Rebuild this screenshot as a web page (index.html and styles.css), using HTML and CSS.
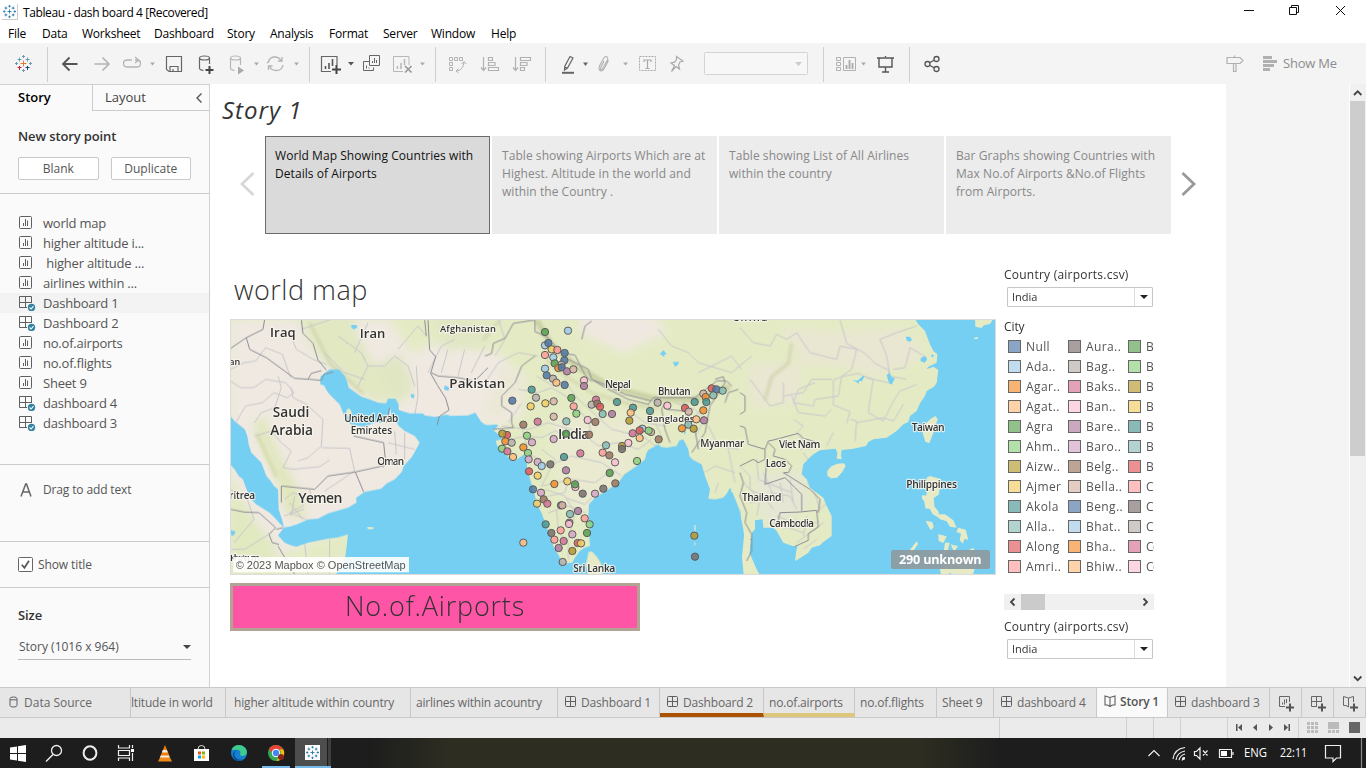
FILE: index.html
```html
<!DOCTYPE html>
<html lang="en">
<head>
<meta charset="utf-8">
<title>Tableau - dash board 4 [Recovered]</title>
<link rel="stylesheet" href="styles.css">
</head>
<body>
<svg width="0" height="0" class="defs">
  <defs>
    <symbol id="sheet" viewBox="0 0 14 14"><rect x=".5" y=".5" width="12" height="12" rx="1" fill="none" stroke="#5f5f5f"/><path d="M4.500 10V7M6.500 10V3M8.500 10V4.500" stroke="#5f5f5f"/></symbol>
    <symbol id="dash" viewBox="0 0 17 16"><path d="M12.500 8V1.500H.5V12.500H8M6.500 1.500V12.500M.5 7.500H12.500" fill="none" stroke="#5f5f5f"/><circle cx="12.500" cy="12.500" r="3.700" fill="#3381a3"/><path d="M10.600 12.500l1.500 1.500 2.400-2.800" fill="none" stroke="#fff" stroke-width="1.100"/></symbol>
    <symbol id="grid" viewBox="0 0 12 12"><rect x=".5" y=".5" width="10" height="10" rx="1" fill="none" stroke="#5f5f5f"/><path d="M5.500 1V11M1 5.500H11" stroke="#5f5f5f"/></symbol>
    <symbol id="book" viewBox="0 0 12 12"><path d="M6 2.500L1 1V10L3.500 10 6 11.500 8.500 10 11 10V1ZM6 2.500V11" fill="none" stroke="#5f5f5f" stroke-width="1.100"/></symbol>
    <symbol id="tab-mark" viewBox="0 0 16 16"><path d="M8 5.500v5M5.500 8h5M8 0v3M6.500 1.500h3M8 13v3M6.500 14.500h3M0 8h3M1.500 6.500v3M13 8h3M14.500 6.500v3M3.500 2v3.500M1.800 3.800h3.500M12.500 2v3.500M10.700 3.800h3.500M3.500 10.500v3.500M1.800 12.200h3.500M12.500 10.500v3.500M10.700 12.200h3.500" fill="none" stroke="currentColor" stroke-width="1.100"/></symbol>
  </defs>
</svg>

<header class="titlebar">
  <span class="appicon"><svg width="13" height="13"><use href="#tab-mark"/></svg></span>
  <span class="apptitle">Tableau - dash board 4 [Recovered]</span>
  <svg class="winctl" width="116" height="23" viewBox="1240 0 116 23"><path d="M1245 10.500h10M1290.500 7.500h7v7h-7zM1292.500 7v-1.500h7v7h-1.500M1337 6l9 9M1346 6l-9 9" fill="none" stroke="#111"/></svg>
</header>
<nav class="menu"><span>File</span><span>Data</span><span>Worksheet</span><span>Dashboard</span><span>Story</span><span>Analysis</span><span>Format</span><span>Server</span><span>Window</span><span>Help</span></nav>

<div class="toolbar">
  <svg width="47" height="35" viewBox="0 47 47 35" fill="none">
    <path d="M23.500 60.500v6M20.500 63.500h6" stroke="#e8762c"/>
    <path d="M23.500 55v3M22 56.500h3M19.500 57.500v4M17.500 59.500h4M27.500 57.500v4M25.500 59.500h4" stroke="#6d9db5"/>
    <path d="M19.500 66v4M17.500 67.500h4" stroke="#c72035"/><path d="M27.500 66v4M25.500 67.500h4" stroke="#1f457e"/>
    <path d="M15 63.500h3M16.500 62v3M29 63.500h3M30.500 62v3M23.500 69v3M22 70.500h3" stroke="#7199a6"/>
  </svg>
  <svg width="261" height="35" viewBox="48 47 261 35" fill="none">
    <path d="M77.500 64H63M69.500 57.500L63 64l6.500 6.500" stroke="#555" stroke-width="1.800"/>
    <path d="M94.500 64H109M102.500 57.500L109 64l-6.500 6.500" stroke="#b4b4b4" stroke-width="1.600"/>
    <path d="M132 60h-4.500q-4 0-4 3.500t4 3.500h9.500q3.500 0 3.500-3.500t-3.500-3.500h-2M135 57l3.500 3-3.500 3" stroke="#b4b4b4" stroke-width="1.300"/>
    <path d="M150 62.500h5l-2.500 3z" fill="#aaa"/>
    <path d="M166.500 56.500h15v15h-12.500l-2.500-2zM170 71.500v-5h8v5M173 71v-2" stroke="#666" stroke-width="1.200"/>
    <g stroke="#666" stroke-width="1.200"><ellipse cx="204.500" cy="58" rx="5" ry="2"/><path d="M199.500 58v10q0 2 4 2.500M209.500 58v6"/></g>
    <path d="M209.500 66v8M205.500 70h8" stroke="#444" stroke-width="2"/>
    <g stroke="#b7b7b7" stroke-width="1.200"><ellipse cx="235.500" cy="58" rx="5" ry="2"/><path d="M230.500 58v10q0 2 4 2.500M240.500 58v7"/></g>
    <path d="M238 66.500l6 4-6 4z" fill="#aaa"/><path d="M254 62.500h5l-2.500 3z" fill="#aaa"/>
    <path d="M268.500 62q1-5 6.500-5 4 0 6 3.500M283 65q-1 5.500-7 5.500-4.500 0-6.500-4M282 57v4h-4M267 63l2.500-2M268.500 70v-4h4" stroke="#b4b4b4" stroke-width="1.300"/><path d="M294 62.500h5l-2.500 3z" fill="#aaa"/>
  </svg>
  <svg width="125" height="35" viewBox="310 47 125 35" fill="none">
    <path d="M331 71.500h-9.500v-15h15.500V65" stroke="#666" stroke-width="1.200"/><path d="M325.500 69v-3M329 69v-6M332.500 66v-7" stroke="#555" stroke-width="1.600"/><path d="M336.500 65v9M332 69.500h9" stroke="#444" stroke-width="2"/><path d="M348 62h6l-3 3.500z" fill="#555"/>
    <path d="M369.500 61.500h-6v9h10v-3M369.500 55.500h10v10h-10zM366.500 68.500v-3M369 68.500v-1M372.500 63v-2M374.500 63v-5M376.500 63v-3" stroke="#666"/>
    <path d="M403 71.500h-9.500v-15h15.500V65" stroke="#b7b7b7"/><path d="M397.500 69v-3M401 69v-6M404.500 65v-6" stroke="#b7b7b7" stroke-width="1.500"/><path d="M405 66l6.500 6.500M411.500 66l-6.500 6.500" stroke="#999" stroke-width="1.700"/><path d="M420 62.500h5l-2.500 3z" fill="#aaa"/>
  </svg>
  <svg width="109" height="35" viewBox="436 47 109 35" fill="none" stroke="#b2b2b2">
    <path d="M449.500 57.500h3v3h-3zM454.500 57.500h3v3h-3zM459.500 57.500h3v3h-3zM449.500 62.500h3v3h-3zM449.500 67.500h3v3h-3zM456 71q7 0 8-9M461.500 64l2.500-2.500 2 2.500M458.500 68.500l-2.500 2.500 2.500 2"/>
    <path d="M483.500 57v13M481 67.500l2.500 3 2.500-3M488.500 57.500h4v3h-4zM488.500 62.500h6.500v3h-6.500zM488.500 67.500h10v3h-10z" stroke-width="1.200"/>
    <path d="M515.500 57v13M513 67.500l2.500 3 2.500-3M520.500 57.500h10v3h-10zM520.500 62.500h6.500v3h-6.500zM520.500 67.500h4v3h-4z" stroke-width="1.200"/>
  </svg>
  <svg width="277" height="35" viewBox="546 47 277 35" fill="none">
    <path d="M570 56.500l3 1.500-5.500 10-3 2 .3-3.800zM564.500 67l3 1" stroke="#666" stroke-width="1.200"/><path d="M562 72.800h12" stroke="#666" stroke-width="2"/><path d="M583 62.500h5l-2.500 3.500z" fill="#666"/>
    <path d="M604 61l-3.500 7q-.5 2 1.500 1.500l5.500-9.500q1-3-1.500-3.500-1.500 0-2.500 2l-4 7.500q-1.500 4 1.500 5 2 0 3-2l4.500-8.500" stroke="#b2b2b2" stroke-width="1.100"/><path d="M623 62.500h5l-2.500 3z" fill="#aaa"/>
    <rect x="639.500" y="56.500" width="16" height="14" stroke="#aaa" stroke-dasharray="2 1"/><path d="M644 62v-2h7v2M647.500 60v8.500M645.500 68.500h4" stroke="#aaa" stroke-width="1.200"/>
    <path d="M676.500 56.500l6.500 4.500-3 1-1.500 3 1 4-3.500-2.500-4.500 5 3-6-3.500-2.500 3.500-.8 2-2.700z" stroke="#aaa" stroke-width="1.200"/>
    <rect x="704.500" y="52.500" width="103" height="22" rx="1" fill="#f7f7f7" stroke="#d4d4d4"/><path d="M795 62h7l-3.500 4z" fill="#ccc"/>
  </svg>
  <svg width="85" height="35" viewBox="824 47 85 35" fill="none">
    <path d="M836.500 57.500h4v3h-4zM836.500 62.500h4v3h-4zM836.500 67.500h4v3h-4zM843.500 57.500h12v13h-12z" stroke="#b2b2b2"/><path d="M846.500 69v-4M849.500 69v-9M852.500 69v-6" stroke="#aaa" stroke-width="1.800"/><path d="M861 62.500h5l-2.500 3z" fill="#aaa"/>
    <path d="M877 58h17M879 58.500v8.500h13v-8.500M885.500 67v5M882 72h7M885.500 57v-1" stroke="#555" stroke-width="1.400"/>
  </svg>
  <svg width="456" height="35" viewBox="910 47 456 35" fill="none">
    <g stroke="#555" stroke-width="1.300"><circle cx="927.500" cy="64" r="2.500"/><circle cx="936.500" cy="59" r="2.500"/><circle cx="936.500" cy="69" r="2.500"/><path d="M930 62.500l4-2.300M930 65.500l4 2.300"/></g>
    <path d="M1227 57.500h13l3 3-3 3h-13zM1234.500 55.500v2M1233.500 63.500v8h2.500v-8" stroke="#b0b0b0" stroke-width="1.200"/>
    <path d="M1263 57.500h9M1263 61.500h14M1263 65.500h11M1263 69.500h7" stroke="#b0b0b0" stroke-width="3"/>
    <text x="1283" y="68" font-size="13" fill="#8d8d8d" textLength="54">Show Me</text>
  </svg>
</div>

<main class="main">
  <aside class="side">
    <div class="panetabs"><b>Story</b><span>Layout<svg width="8" height="12" viewBox="0 0 8 12"><path d="M6.500 1.500L2 6l4.500 4.500" fill="none" stroke="#555" stroke-width="1.400"/></svg></span></div>
    <section class="newpoint"><h3>New story point</h3><div class="btns"><button>Blank</button><button>Duplicate</button></div></section>
    <ul class="sheets">
      <li><svg><use href="#sheet"/></svg>world map</li>
      <li><svg><use href="#sheet"/></svg>higher altitude i...</li>
      <li><svg><use href="#sheet"/></svg>&nbsp;higher altitude ...</li>
      <li><svg><use href="#sheet"/></svg>airlines within ...</li>
      <li class="on d"><svg><use href="#dash"/></svg>Dashboard 1</li>
      <li class="d"><svg><use href="#dash"/></svg>Dashboard 2</li>
      <li><svg><use href="#sheet"/></svg>no.of.airports</li>
      <li><svg><use href="#sheet"/></svg>no.of.flights</li>
      <li><svg><use href="#sheet"/></svg>Sheet 9</li>
      <li class="d"><svg><use href="#dash"/></svg>dashboard 4</li>
      <li class="d"><svg><use href="#dash"/></svg>dashboard 3</li>
    </ul>
    <section class="dragtext"><svg width="12" height="14" viewBox="0 0 12 14"><path d="M1 13.500L5.700 1h.8L11 13.500M2.700 9h6.700" fill="none" stroke="#666" stroke-width="1.500"/></svg>Drag to add text</section>
    <section class="showtitle"><svg width="15" height="15" viewBox="0 0 15 15"><rect x=".5" y=".5" width="14" height="14" rx="1" fill="#fff" stroke="#666"/><path d="M3.800 7.800l2.600 3 4.600-7" fill="none" stroke="#555" stroke-width="1.700"/></svg>Show title</section>
    <section class="size"><h3>Size</h3><div class="select">Story (1016 x 964)<i class="caret"></i></div></section>
  </aside>

  <div class="canvas">
    <h1>Story 1</h1>
    <div class="points">
      <svg width="17" height="28" viewBox="0 0 17 28"><path d="M14.500 3L3 14l11.500 11" fill="none" stroke="#d8d8d8" stroke-width="2.800"/></svg>
      <div class="pt sel">World Map Showing Countries with<br>Details of Airports</div>
      <div class="pt">Table showing Airports Which are at<br>Highest. Altitude in the world and<br>within the Country .</div>
      <div class="pt">Table showing List of All Airlines<br>within the country</div>
      <div class="pt">Bar Graphs showing Countries with<br>Max No.of Airports &amp;No.of Flights<br>from Airports.</div>
      <svg width="17" height="28" viewBox="0 0 17 28"><path d="M2.500 3L14 14 2.500 25" fill="none" stroke="#999" stroke-width="2.800"/></svg>
    </div>
    <div class="dashboard">
      <div class="left">
        <h2>world map</h2>
        <svg class="map" width="766" height="256" viewBox="690 957 2298 768">
          <defs>
            <filter id="soft" x="-20%" y="-20%" width="140%" height="140%"><feGaussianBlur stdDeviation="14"/></filter>
            <filter id="soft2" x="-20%" y="-20%" width="140%" height="140%"><feGaussianBlur stdDeviation="5"/></filter>
            <filter id="coast" filterUnits="userSpaceOnUse" x="660" y="930" width="2360" height="820"><feTurbulence type="fractalNoise" baseFrequency=".14" numOctaves="2" seed="4"/><feDisplacementMap in="SourceGraphic" scale="4.500" xChannelSelector="R" yChannelSelector="G"/></filter>
          </defs>
          <rect x="690" y="957" width="2298" height="768" fill="#e4ebc4"/>
          <path d="M690 957H1170L1230 1060 1330 1020 1500 1060 1560 1130 1570 1240 1500 1280H1280L1260 1500 690 1725Z" fill="#efe9e1" filter="url(#soft)"/>
          <g filter="url(#soft)">
            <path d="M890 940L940 1050 1010 1120 1090 1190 1180 1215 1240 1180 1140 1120 1080 1020 1050 940Z" fill="#e1e8c2"/>
            <path d="M1120 1100L1200 1060 1240 1150 1200 1210Z" fill="#e0e6c2"/>
            <path d="M1290 950h190l-20 90-130 10z" fill="#e1e7c4"/>
            <path d="M760 1270l60 130 40 140 60 20 -20-80-60-110-50-120z" fill="#dfe7ba"/>
            <path d="M690 1430l70 130 60 70 10 90H690z" fill="#e0e9bf"/>
            <path d="M1740 940h220l40 60-130 60-130-60z" fill="#efe8e0"/>
            <path d="M2250 1090h160l-20 120-140 10zM2480 1000l220-20 80 90-150 60-130-40zM2340 980l200 20 60 100-190-10z" fill="#e9e6d2"/>
            <path d="M1500 1100l90 30-80 120-60 0z" fill="#ece8d6"/>
            <path d="M1650 1250h280l-30 160-160 140-60-60z" fill="#e9ead0"/>
            <path d="M2260 1420h150l20 100-130 60z" fill="#e5e6d4"/>
          </g>
          <g fill="none" filter="url(#soft2)" stroke-linejoin="round">
            <path d="M1610 960l40 70 80 70 100 60 130 35 120 5 110 -40" stroke="#cbd1a5" stroke-width="18"/>
            <path d="M1640 1080l60 50 80 50 120 35 80 10" stroke="#d8dcb4" stroke-width="12"/>
            <path d="M1500 960l-50 60M930 970l60 120 100 90M2375 1030l-10 60-50 40-20 70" stroke="#d0d4ae" stroke-width="8"/>
            <path d="M1580 1420l20 100 30 130M770 1300l60 130" stroke="#d6deae" stroke-width="12"/>
          </g>

          <g fill="none" stroke="#c9c7cc" stroke-width="3" stroke-linejoin="round" filter="url(#coast)">
            <g transform="translate(684 948)">
              <path d="M8 160l40-20 35-5 30-40 50 20 25 70M8 195l30 20 40 0 35-25 60 10 25 30-20 15-40-15-35 30-50 10-30 50 30 25M190 215l5 30 40 20 50 45-5 80-40 35-30 10M150 180l10 35-20 60-40 15-20 30M280 395l85 2 15 70M80 360l50-15 30 35 30 25-25 50 30 5 80-8 30-20M245 520l5 25M380 465l-90 60M480 380l80 20M500 345l5 70M530 350v80"/>
              <path d="M185 50l20 50 50 30 40 15M330 60l70 50 20 40 50 0 30-30 40 30 20 60M220 40l90-30M380 110l40-90M420 150l-30 60M510 100l60-70 25 30M565 150l5 90-10 60M600 170l40-80 40-20M640 170l20-70M690 180l20-80M730 170l40-80M290 110l60 60 60 20"/>
              <path d="M170 550l25-20 30 10 0 30-40 20 50 20M8 520l50 30 20 60-60 70M230 680l10 95M305 670v105M130 650l-80 50-40 0M185 560l40 50M200 540l-10 60M168 600l60-20"/>
            </g>
            <g transform="translate(1455 948)">
              <path d="M155 180l50 30 40-20M100 220l60 10 40-15 50 30 60 70 10 40-60 10-50-20-40 20-50-5-40 10M110 260l-40 60M250 210l30 40 100 90 80 20M50 330l80 10 60-20 100 30 50 40 60-10 60 20 40-30M110 330l20 80 60 40 70-30 90 20 60 40M170 400l40 30-40 80 90-20 70 10 40-30M250 480l-10 50-50 10M180 520l60 20 30 50-20 80M240 545l60 20 20-20M450 340l60 50 20-30-20-40M440 290l40 30 60 10M570 260l60 20 30 30-30 50M600 330l60-60M190 590l60-20 50 20M215 580l5 70 30 30 0 50"/>
              <path d="M520 40l40 50 50 20 30 30 100 30 60-50M640 170l100-50 30 40M670 330l30 60 60 10M640 480l50-30 60 20M700 500l-10 30M730 400l20 100M0 200l40-60 60-30 60 10M40 10l20 60-30 50"/>
            </g>
            <g transform="translate(2220 948)">
              <path d="M0 35l40 45 50 10 20-35 30 15 30-20 40 60 80 20 10-40 50 10-15 60-30 20-10 60-70 10-5 20-60-10 15-40 50-20M300 12l20 70 55 30 30 30 40 20 10 40-70-15-30-15-50 10-25 10 0 75 50 20-10 35M370 180l30 10-10 60-5 40 45 25 30-60 20-30 50-20M460 160l35-5 15-60 50 30M530 30l-60 20-50 20 20 50 10 60 50 10M130 240l60-10 25-40 60 0M155 240l20 50 80 10 20-20M280 350l-20 40M330 310l20 5-5 60M350 320l80-15 30 10 30-50M160 310l30 20-20 20 40 50M30 190l60 80 40-10 0-60"/>
              <path d="M0 450l30 30 0 40 40 20 30 40M50 430l5 60 50 20 50 20M90 530l60 10 20 40M60 550l-10 50M200 500l20 20 20 60M110 600l50 20 70 0M130 640l40-30M260 560l-30 30M250 620l-40 30-40 30M190 410l20 30M210 390l-30 10M230 670l-40 30M10 500l60 60M70 470l40 90M20 670l20 10M15 710l25 5M560 500l45 20M555 540l20 30M120 500l10 60M150 490l10 70M30 560l50-10M100 620l90 30M200 600l-10 60M570 330l20 10M560 350l18 8"/>
            </g>
          </g>

          <g fill="#74cff2" filter="url(#coast)">
            <g transform="translate(684 948)">
              <path d="M277 182L292 170 305 160 333 160 350 180 357 196 362 215 380 228 400 242 425 250 450 260 474 262 480 248 502 248 512 265 512 282 545 292 585 292 590 298 620 303 655 296 670 300 720 298 742 290 755 310 760 318 775 328 790 330V780H320L345 745 353 715 360 655 330 664 300 668 240 680 205 692 190 688 170 680 150 658 168 634 185 632 210 624 240 610 270 608 300 592 360 575 385 560 385 545 410 528 460 518 475 503 500 490 522 467 527 450 550 425 562 405 575 380 560 360 530 345 512 330 505 318 490 300 488 275 483 300 465 320 440 320 410 332 370 327 353 306 345 290 335 265 300 230 288 208 277 205Z"/>
              <path d="M-6 285L22 318 50 340 58 360 62 385 70 410 100 440 115 480 128 495 138 510 150 520 152 580 162 610 168 634 155 622 145 610 125 590 85 565 70 550 60 530 50 505 45 490 32 480 20 460 -6 430Z"/>
              <path d="M370 26l15 0 3 8-10 6-8-5zM548 234l12 2-3 12-8-5zM650 208l8 3 7 6-5 7-12-4zM8 642l15 5-6 12-9-2z"/>
            </g>
            <g transform="translate(1455 948)">
              <path d="M0 328L35 325 40 330 25 343 42 356 52 370 32 374 36 388 65 420 90 433 118 415 126 440 126 462 135 490 145 520 155 560 170 592 180 618 195 660 205 690 222 720 232 742 262 740 270 724 285 705 298 695 315 690 313 660 316 640 310 600 312 565 330 545 370 520 400 500 418 475 440 460 455 450 480 430 484 412 490 402 520 385 528 393 545 395 575 390 583 373 595 370 610 400 613 420 622 430 650 445 660 480 675 520 670 548 690 550 715 545 725 533 735 515 745 535 763 580 775 640 782 700 810 790H0Z"/>
              <path d="M524 112l8-5 4-6 5 9 5 2-8 5 0 6-6-4zM563 138l20 0-5 9-8 5zM595 344l8 3-4 10z"/>
            </g>
            <g transform="translate(2220 948)">
              <path d="M515 -6L535 25 555 45 570 85 580 105 592 115 590 140 565 152 560 160 580 152 595 162 590 200 582 212 560 225 555 240 540 262 530 285 510 300 505 318 490 325 470 345 440 365 400 370 385 378 378 390 340 398 305 402 303 418 305 430 290 428 292 410 287 398 240 403 220 415 204 430 190 445 185 475 200 490 210 515 250 545 260 570 275 600 275 660 250 678 240 688 215 695 205 710 175 730 165 735 168 710 172 690 158 690 130 680 110 645 100 635 70 635 68 610 45 613 45 640 35 650 30 690 28 710 45 750 58 790H790V-6Z"/>
              <path d="M0 575l5 60 7 30 0 50 18 35 18 40H0zM498 62l12 0 6 10-8 6-9-6zM542 126l12-6 8 10-8 10-12-4zM573 115l10 3-7 7zM440 178l8-8 6 12 11 6-5 8-5 10-8-6zM338 192l14 2 16-14 6 0-8 16-9-1 0 8z"/>
            </g>
          </g>
          <g fill="#e6ebc6" filter="url(#coast)">
            <path d="M417 633l20 1-2 6-15 0zM355 284l7-8 8 10-2 14-10 2z" transform="translate(684 948)"/>
            <path d="M310 708l10-2 15 16 12 18 8 45h-45l-6-40zM628 628h4v18h-4zM628 678h3v10h-3z" transform="translate(1455 948)"/>
            <g transform="translate(2220 948)">
              <path d="M262 464l12-13 18-8 20-1 5 8-10 18-16 17-18 2-11-8zM572 308l15-8 6 10-10 32-15 40-12-5-8-25 8-28zM705 0h60l-15 24-18 4-8 8-18-4zM702 64h12v5h-12z"/>
              <path d="M560 485l10-5 18 5 15 4-3 25-4 22-15 10 2 25 14 18-4 14-15-8-8-16-14-2-3-20-8-12 3-8 10 2 6-20-6-18zM557 614l20 4 4 15-8 10-8-12zM585 595l30 0 25 18 10 22-20-3-10-16-20-6zM655 635l22 6 8 30-12-2-4 14-10-10 4-20-14-6zM595 655l25 6-10 20-14-6zM615 680l14 0-8 34-12 8zM632 685l22 6-12 16zM530 676l4 8-20 30-12-2zM605 785l-6-28 16-22 30-10 30-16 25-14 8 20 0 30-12 40-30-2-24 2-10-15z"/>
              <path d="M14 640l20 15-4 35-2 20 17 40 20 38H12l-6-65z"/>
            </g>
          </g>

          <g fill="none" stroke="#8d8d96" stroke-width="3" stroke-linejoin="round" filter="url(#coast)">
            <g transform="translate(684 948)">
              <path d="M8 97l47-32 50-25 5-30M55 65l10 35 50 25 85 62 45 3 35 3 8-18 28-7M240 190l10-18 30-8M220 12l5 40 30 30 15 50 25 30M600 12l5 90 18 20-15 50 20 35 25 40 10 35-30 20-5 25M610 170l20 10 60 5 50 10 30-30 10-10M595 60l-5-48M160 560v-50l100 10 40-40 82-12 90-20 20-20M382 468l25 60M472 430l-5-50-90-20M8 580l40 8 45 2 50 45-20 20 10 25 20 5M145 640l20-5M150 690l50 85M475 320l10-45"/>
            </g>
            <g transform="translate(1455 948)">
              <path d="M0 120l20-8 5-30 35-15 25-45 65-10 0 35 35 15 45 50 40 5 30 60 20 20M150 120l-40 30-20 50-40 40 0 30 30 20 0 30 5 15-60 5M250 130l60 30 10 30 50 30 60 30 60 15 15-20 45 0 80 0 25-20 40-30 30 0 15 15M320 190l50 20 50 25 80 20M690 190l25-8 5 20M540 260l-10 20 10 60 15 40M595 260l15 20 0 50-20 20M545 280l50 5M720 200l-25 40-20 30-15 80-40 60M630 340l10 60M760 220l-30 10-10 30M290 70l10-40 20-15"/>
            </g>
            <g transform="translate(2220 948)">
              <path d="M0 230l15 10 0 45-15 10M0 330l15 5 10 50 50 15 0 30-20 10-15-10-40 20M75 400l10-25 15-3 75-20 15 15 35 10M85 380l20 20-5 20 35 10 20 20-10 20-15 0 80 50 30 30-5 40M75 505l30-10 30-10 30 30 20 20M75 505l5-70M120 590l60-2 50-5 5 50-30 20 0 20-40 18M120 590l-10 45M0 470l10 30-10 40 20 50-5 30 20 35 0 50-15 30M185 535l0 50"/>
            </g>
          </g>
          <g class="labels" id="country-names">
            <text x="810" y="1010" font-size="39" textLength="77">Iraq</text><text x="1079" y="1014" font-size="39" textLength="77">Iran</text>
            <text x="1320" y="996" font-size="28" textLength="168">Afghanistan</text><text x="1348" y="1165" font-size="40" textLength="168">Pakistan</text>
            <text x="818" y="1252" font-size="41" textLength="110">Saudi</text><text x="811" y="1304" font-size="41" textLength="128">Arabia</text>
            <text x="1033" y="1266" font-size="30" textLength="162">United Arab</text><text x="1052" y="1302" font-size="30" textLength="124">Emirates</text>
            <text x="1132" y="1394" font-size="30" textLength="80">Oman</text><text x="895" y="1508" font-size="42" textLength="132">Yemen</text>
            <text x="688" y="1094" font-size="27">an</text><text x="688" y="1496" font-size="30" textLength="77">ritrea</text>
            <text x="1815" y="1165" font-size="31" textLength="78">Nepal</text><text x="1974" y="1184" font-size="30" textLength="98">Bhutan</text>
            <text x="1940" y="1266" font-size="29" textLength="143">Banglades</text><text x="1674" y="1318" font-size="42" textLength="94">India</text>
            <text x="2101" y="1341" font-size="30" textLength="132">Myanmar</text><text x="1720" y="1717" font-size="31" textLength="126">Sri Lanka</text>
            <text x="2337" y="1343" font-size="31" textLength="124">Viet Nam</text><text x="2297" y="1401" font-size="31" textLength="62">Laos</text>
            <text x="2226" y="1503" font-size="31" textLength="118">Thailand</text><text x="2308" y="1581" font-size="31" textLength="134">Cambodia</text>
            <text x="2735" y="1293" font-size="31" textLength="99">Taiwan</text><text x="2719" y="1465" font-size="31" textLength="152">Philippines</text>
            <text x="2197" y="964" font-size="32" textLength="105">China</text><text x="690" y="1684" font-size="29" textLength="90">Khartoum</text>
          </g>
          <g id="airports" transform="translate(1455 948)"></g>
          <rect x="700" y="1671" width="527" height="46" fill="#fff" fill-opacity=".9"/>
          <text x="707" y="1707" class="credit" textLength="510">© 2023 Mapbox © OpenStreetMap</text>
          <rect x="2673" y="1650" width="297" height="57" rx="7" fill="#8d9ba0" fill-opacity=".94"/>
          <text x="2697" y="1692" class="unknown" textLength="248">290 unknown</text>
          <rect x="691.500" y="958.500" width="2295" height="765" fill="none" stroke="#dcdcdc" stroke-width="3"/>
        </svg>
        <div class="banner">No.of.Airports</div>
      </div>
      <div class="filters">
        <label>Country (airports.csv)</label>
        <div class="combo"><span>India</span><i class="caret"></i></div>
        <label class="city">City</label>
        <div class="legend" id="legend"></div>
        <div class="hscroll"><svg width="150" height="16" viewBox="0 0 150 16"><path d="M10.500 4.500L7 8l3.500 3.500M139.500 4.500L143 8l-3.500 3.500" fill="none" stroke="#444" stroke-width="1.800"/><rect x="17" width="24" height="16" fill="#cbcbcb"/></svg></div>
        <label class="second">Country (airports.csv)</label>
        <div class="combo"><span>India</span><i class="caret"></i></div>
      </div>
    </div>
  </div>
  <div class="gutter"></div>
  <div class="vscroll"><svg width="16" height="17" viewBox="0 0 16 17"><path d="M4 11l3.700-3.700 3.700 3.700" fill="none" stroke="#444" stroke-width="1.800"/></svg><div class="thumb"></div><svg width="16" height="17" viewBox="0 0 16 17"><path d="M4 6.500l3.700 3.700 3.700-3.700" fill="none" stroke="#444" stroke-width="1.800"/></svg></div>
</main>

<nav class="tabs">
  <div class="ds"><svg width="9" height="12" viewBox="0 0 9 12"><path d="M1 2.500q0-1.500 3.500-1.500t3.500 1.500v7q0 1.500-3.500 1.500t-3.500-1.500zM1 3.800h7" fill="none" stroke="#5f5f5f"/></svg>Data Source</div>
  <div class="cut">ltitude in world</div>
  <div class="t3">higher altitude within country</div>
  <div class="t4">airlines within acountry</div>
  <div class="g"><svg><use href="#grid"/></svg>Dashboard 1</div>
  <div class="g rust"><svg><use href="#grid"/></svg>Dashboard 2</div>
  <div class="sand">no.of.airports</div>
  <div>no.of.flights</div>
  <div>Sheet 9</div>
  <div class="g"><svg><use href="#grid"/></svg>dashboard 4</div>
  <div class="g current"><svg><use href="#book"/></svg>Story 1</div>
  <div class="g"><svg><use href="#grid"/></svg>dashboard 3</div>
  <div class="add"><svg viewBox="0 0 16 16"><path d="M7 10.500H1.500v-10h10V6M4.500 8.500v-2M6.500 8.500v-5M8.500 7v-4" fill="none" stroke="#666"/><path d="M12 7.500v8M8 11.500h8" stroke="#555" stroke-width="2"/></svg></div>
  <div class="add"><svg viewBox="0 0 16 16"><path d="M7 10.500H1.500v-10h10V6M6.500 .5v10M1.500 5.500h10" fill="none" stroke="#666"/><path d="M12 7.500v8M8 11.500h8" stroke="#555" stroke-width="2"/></svg></div>
  <div class="add"><svg viewBox="0 0 16 16"><path d="M6.500 2L1.500 .5V9.500L4 9.500 6.500 11V2L11.500 .5V6" fill="none" stroke="#666"/><path d="M12 7.500v8M8 11.500h8" stroke="#555" stroke-width="2"/></svg></div>
</nav>
<div class="status">
  <i></i><i></i><i></i><i></i><i></i>
  <i><svg width="70" height="20" viewBox="1228 718 70 20" fill="#555"><path d="M1236 724h1.500v7h-1.500zM1242 724v7l-4-3.500zM1257 724v7l-4-3.500zM1269 724v7l4-3.500zM1284 724v7l4-3.500zM1288.500 724h1.500v7h-1.500z"/></svg></i>
  <i class="last"><svg width="66" height="20" viewBox="1299 718 66 20"><path d="M1307 722h3v3h-3zM1311 722h3v3h-3zM1315 722h3v3h-3zM1307 726h3v3h-3zM1311 726h3v3h-3zM1315 726h3v3h-3zM1307 730h3v3h-3zM1311 730h3v3h-3zM1315 730h3v3h-3zM1328 722h11v7h-11zM1328 730h3v3h-3zM1332 730h3v3h-3zM1336 730h3v3h-3z" fill="#bbb"/><path d="M1349 722h11v11h-11z" fill="#666"/></svg></i>
</div>
<footer class="taskbar">
  <svg width="360" height="30" viewBox="0 738 360 30" fill="none">
    <path d="M10 747.500l7-1v6.500h-7zM18 746.300l8-1.300v8h-8zM10 754h7v6.500l-7-1zM18 754h8v8l-8-1.300z" fill="#fff"/>
    <circle cx="56.500" cy="750.500" r="5" stroke="#eee" stroke-width="1.300"/><path d="M53 754.500l-7 7" stroke="#eee" stroke-width="1.500"/>
    <ellipse cx="90" cy="753" rx="6.400" ry="6.800" stroke="#eee" stroke-width="2"/>
    <path d="M118.500 745v3h11v-3M118.500 761v-3h11v3M118.500 750.500v5h11v-5zM132.500 745v3M132.500 753v8" stroke="#eee" stroke-width="1.200"/><path d="M131 749h3v3h-3z" fill="#fff"/>
    <path d="M165 745l5 12h-10z" fill="#f07d08"/><path d="M162.500 750l4 0 1 2.500h-6zM160.500 755.500h8l1 2.500h-10z" fill="#eee" transform="translate(.3 0)"/><path d="M160 757.500h10l2 4h-14z" fill="#f08a16"/>
    <path d="M194 749h15v12h-15z" fill="#fff"/><path d="M198 749q0-3.500 3.500-3.500t3.500 3.500" stroke="#ddd"/><path d="M198 751.500h3v3h-3z" fill="#f25022"/><path d="M202 751.500h3v3h-3z" fill="#7fba00"/><path d="M198 755.500h3v3h-3z" fill="#00a4ef"/><path d="M202 755.500h3v3h-3z" fill="#ffb900"/>
    <circle cx="239" cy="753" r="8" fill="#1681cf"/><path d="M231.500 750q2-5 7.500-5 7.500 1 8 7.500-.5 3-4 3.500-3 0-3-2 1.500-3-1.500-4-3-.5-7 0z" fill="#3ecb8b"/><path d="M237 750q-4 3-2 7 3 4 8 2-3 3-7 1.500-4-3-3-7 1-3 4-3.500z" fill="#0b4f98"/>
    <circle cx="276" cy="753" r="8" fill="#34a853"/><path d="M269 749q2.500-4 7-4t7.500 4.500h-7.500q-3 0-3.500 4z" fill="#ea4335"/><path d="M283.500 749.500q2 5-1 8.500t-6 3l4-7.500q1-2-1-4z" fill="#fbbc04"/><circle cx="276" cy="753" r="3.800" fill="#4285f4" stroke="#fff"/><circle cx="281" cy="757" r="3" fill="#87251d"/>
    <path d="M262 766h28v2h-28z" fill="#76b9ed"/>
    <path d="M295 738h32v30h-32z" fill="#4d4d4d"/><path d="M328 738h3v30h-3z" fill="#3f3f3f"/><path d="M295 766h36v2h-36z" fill="#76b9ed"/><path d="M305 745h15v15h-15z" fill="#fff"/><use href="#tab-mark" x="306" y="746" width="13" height="13" color="#2a7aa8"/>
  </svg>
  <svg width="226" height="30" viewBox="1140 738 226 30" fill="none" stroke="#eee" stroke-width="1.200">
    <path d="M1148.500 756l5.500-5.500 5.500 5.500"/>
    <path d="M1173 759q1-10 12-11.500M1176 760q1-7.500 9-9M1179 760q1-4.500 6-6M1182 760.500q.5-2 3-3"/><circle cx="1183.500" cy="758.500" r="1.500" fill="#eee" stroke="none"/>
    <path d="M1194.500 751.500h2l3.500-3.500v11l-3.500-3.500h-2zM1203 750.500l4.500 5M1207.500 750.500l-4.500 5"/>
    <path d="M1219.500 749.500h12v8h-12zM1233 752v3"/><path d="M1221 751h6v5h-6z" fill="#fff" stroke="none"/>
    <g stroke="none" fill="#fff" font-size="12"><text x="1244" y="757" textLength="23" lengthAdjust="spacingAndGlyphs">ENG</text><text x="1280" y="757" textLength="27" lengthAdjust="spacingAndGlyphs">22:11</text></g>
    <path d="M1325.500 745.500h15v12.500h-4l-3.500 3.500v-3.500h-7.500z"/><path d="M1361.500 738v30" stroke="#888"/>
  </svg>
</footer>
<script src="app.js"></script>
</body>
</html>
```
FILE: styles.css
```css
* { box-sizing: border-box; }
body { margin: 0; width: 1366px; height: 768px; overflow: hidden; display: grid; grid-template-rows: 23px 20px 41px 603px 31px 20px 30px; font-family: "Open Sans", "Noto Sans", sans-serif; font-size: 12px; color: #555; background: #fff; }
svg { display: block; flex: none; }
.defs { position: absolute; }
h1, h2, h3, ul { margin: 0; padding: 0; font-weight: 400; }
i { font-style: normal; }
.titlebar { display: flex; align-items: center; color: #000; }
.appicon { width: 16px; height: 16px; margin: 1px 5px 0 2px; display: grid; place-items: center; border: 1px solid #ccc; border-width: 0 1px 1px 0; color: #2a7aa8; }
.apptitle { flex: 1; letter-spacing: -.39px; padding-top: 1px; }
.winctl { margin-right: 11px; }
.menu { display: grid; grid-template-columns: 34px 40px 72px 73px 43px 59px 54px 48px 60px auto; padding-left: 8px; line-height: 21px; color: #000; letter-spacing: -.22px; }
.toolbar { display: flex; align-items: center; padding-top: 2px; background: #f4f4f4; }
.toolbar svg + svg { border-left: 1px solid #cfcfcf; box-sizing: content-box; }
.main { display: grid; grid-template-columns: 210px 1016px 123px 17px; background: #f4f4f4; min-height: 0; }
.side { background: #fafafa; border-right: 1px solid #d0d0d0; border-top: 1px solid #d0d0d0; display: flex; flex-direction: column; }
.panetabs { display: grid; grid-template-columns: 92px 1fr; height: 26px; font-size: 13px; line-height: 25px; color: #444; }
.panetabs b { padding-left: 18px; color: #000; font-weight: 600; }
.panetabs span { border-left: 1px solid #ccc; border-bottom: 1px solid #ccc; padding: 0 6px 0 12px; display: flex; justify-content: space-between; align-items: center; }
.newpoint { height: 83px; padding: 15px 18px 0; border-bottom: 1px solid #ccc; }
.side h3 { font-size: 13px; font-weight: 600; line-height: 20px; letter-spacing: -.12px; color: #333; }
.btns { display: flex; gap: 12px; margin-top: 11px; }
.btns button { width: 81px; height: 23px; padding: 0; border: 1px solid #c9c9c9; border-radius: 2px; background: #fff; font: 12px "Open Sans", sans-serif; color: #555; }
.sheets { list-style: none; height: 271px; padding-top: 19px; border-bottom: 1px solid #ccc; font-size: 13px; letter-spacing: -.22px; }
.sheets li { display: flex; height: 20px; align-items: center; padding-left: 19px; white-space: pre; }
.sheets svg { width: 14px; height: 14px; margin-right: 10px; }
.sheets .d svg { width: 17px; height: 16px; margin-right: 7px; }
.sheets .on { background: #f3f3f3; }
.dragtext { height: 77px; border-bottom: 1px solid #ccc; display: flex; align-items: flex-start; padding: 18px 20px; gap: 11px; line-height: 14px; letter-spacing: -.14px; }
.showtitle { height: 46px; border-bottom: 1px solid #ccc; display: flex; align-items: center; padding-left: 18px; gap: 5px; letter-spacing: -.1px; }
.size { padding: 17px 18px; }
.select { height: 26px; width: 173px; margin-top: 9px; padding: 0 0 0 1px; border-bottom: 1px solid #bbb; display: flex; align-items: center; justify-content: space-between; }
.caret { border: 4px solid transparent; border-top-color: #444; border-bottom: 0; }
.canvas { background: #fff; min-width: 0; overflow: hidden; }
h1 { height: 52px; padding-left: 12px; line-height: 51px; font-size: 24px; letter-spacing: 1px; font-style: italic; color: #333; }
.points { display: flex; align-items: center; gap: 2px; padding-left: 29px; height: 98px; }
.points > svg { margin-bottom: 2px; }
.points > svg:first-child { margin-right: 7px; }
.points > svg:last-child { margin-left: 7px; }
.pt { width: 225px; height: 98px; padding: 11px 10px; background: #ececec; line-height: 18px; color: #888; letter-spacing: .06px; white-space: nowrap; }
.pt.sel { background: #dadada; border: 1px solid #6b6b6b; padding: 10px 9px; color: #111; }
.dashboard { display: grid; grid-template-columns: 774px 150px; padding: 32px 0 0 20px; }
h2 { height: 53px; padding-left: 4px; line-height: 47px; font-size: 27px; letter-spacing: .5px; font-weight: 300; color: #333; }
.labels { font-weight: 600; fill: #333; stroke: #f7f5ee; stroke-width: 7px; paint-order: stroke; stroke-linejoin: round; stroke-opacity: .8; }
.credit { font: 33px "Liberation Sans", sans-serif; fill: #555; }
.unknown { font-size: 38px; font-weight: 700; fill: #fff; }
.banner { width: 410px; height: 48px; margin-top: 8px; border: 3px solid #b3a394; background: #ff55a7; text-align: center; line-height: 40px; font-size: 27px; letter-spacing: .8px; font-weight: 300; color: #333; }
.filters { color: #333; padding-top: 1px; }
.filters label { display: block; line-height: 16px; letter-spacing: .23px; }
.combo { width: 146px; height: 20px; margin: 4px 0 0 3px; border: 1px solid #c6c6c6; border-radius: 1px; display: flex; align-items: center; font-size: 11px; }
.combo span { width: 127px; padding-left: 4px; border-right: 1px solid #ddd; line-height: 18px; }
.combo .caret { margin-left: 5px; border-top-color: #222; border-width: 4px 4px 0; }
.filters .city { margin-top: 12px; letter-spacing: -.1px; }
.legend { width: 150px; height: 240px; margin-top: 1px; padding-left: 4px; display: grid; grid-auto-flow: column; grid-template: repeat(12, 20px) / repeat(3, 60px); overflow: hidden; font-size: 12px; letter-spacing: .4px; color: #555; }
.legend div { display: flex; align-items: center; gap: 5px; white-space: nowrap; }
.swatch { width: 13px; height: 13px; border: 1px solid #666; flex: none; }
.clip { width: 8px; overflow: hidden; letter-spacing: -.6px; }
.hscroll { margin-top: 18px; height: 16px; background: #f0f0f0; }
.filters .second { margin-top: 9px; }
.vscroll { border-left: 1px solid #fff; background: #f0f0f0; display: flex; flex-direction: column; justify-content: space-between; }
.thumb { height: 355px; width: 15px; background: #cdcdcd; margin-bottom: auto; }
.tabs { display: grid; grid-template-columns: 131px 95px 185px 147px 102px 104px 91px 82px 57px 103px 71px 102px 32px 32px 32px; background: #e6e6e6; border-top: 1px solid #c9c9c9; border-bottom: 1px solid #c9c9c9; color: #666; letter-spacing: -.17px; }
.tabs div { display: flex; align-items: center; padding: 0 0 0 5px; border-right: 1px solid #c9c9c9; white-space: nowrap; overflow: hidden; }
.tabs .g { padding-left: 7px; }
.tabs svg { width: 12px; height: 12px; margin: 0 4px 2px 0; }
.tabs .ds { padding-left: 9px; letter-spacing: 0; }
.tabs .ds svg { width: 9px; margin-right: 6px; }
.tabs .cut { padding-left: 0; }
.tabs .t3 { padding-left: 8px; }
.tabs .t4 { letter-spacing: -.2px; }
.tabs .rust { border-bottom: 4px solid #ab5200; padding-top: 4px; }
.tabs .sand { border-bottom: 4px solid #dec67a; padding-top: 4px; }
.tabs .current { background: #fafafa; font-weight: 600; color: #555; padding-bottom: 2px; }
.tabs .add { padding-left: 8px; }
.tabs .add svg { width: 16px; height: 16px; margin: 2px 0 0; }
.status { display: grid; grid-template-columns: 1000px 127px 27px 27px 47px 71px 67px; background: #ebebeb; }
.status i { border-right: 1px solid #d0d0d0; }
.status .last { border: 0; }
.taskbar { display: flex; justify-content: space-between; background: linear-gradient(90deg, #1d1d1d 0 370px, #2d2d22 450px, #2d2d22 920px, #1d1d1d 1000px); }
```
FILE: app.js
```js
const palette = {
  b: "#4e79a7", B: "#a0cbe8", o: "#f28e2b", O: "#ffbe7d", g: "#59a14f", G: "#8cd17d",
  y: "#b6992d", Y: "#f1ce63", t: "#499894", T: "#86bcb6", r: "#e15759", R: "#ff9d9a",
  k: "#79706e", K: "#bab0ac", m: "#d37295", M: "#fabfd2", p: "#b07aa1", P: "#d4a6c8",
  n: "#9d7660", N: "#d7b5a6"
};

const airports = `180 48 g,249 44 B,180 88 B,190 81 b,200 100 Y,217 102 R,180 117 R,239 111 b,205 124 B,238 133 b,229 146 K,209 142 g,220 156 o,230 154 b,180 158 B,246 166 p,265 160 N,185 178 b,204 188 K,214 200 O,239 207 b,297 193 M,297 210 p,140 221 t,82 254 b,153 245 K,181 262 Y,206 256 N,137 271 Y,259 246 g,266 271 R,274 293 G,333 251 m,320 266 K,337 263 n,345 272 r,396 258 t,353 294 T,381 294 p,444 275 t,437 290 O,433 314 y,495 285 t,518 260 K,547 269 M,206 302 N,158 317 m,115 326 n,244 316 T,308 312 M,331 318 n,66 357 r,52 353 y,61 376 o,80 380 K,126 359 G,141 379 P,115 394 o,129 411 G,51 398 G,67 406 m,84 423 O,131 430 P,158 438 P,170 450 B,196 445 k,132 466 r,158 479 Y,206 369 P,243 353 g,312 356 n,286 412 m,237 423 t,363 388 T,353 410 R,373 418 n,390 439 M,411 390 y,411 399 k,430 381 M,443 352 m,472 338 B,464 343 r,498 348 N,491 344 G,464 366 O,521 370 n,456 435 G,374 471 g,391 502 n,355 518 k,243 463 p,208 504 o,247 496 Y,271 513 M,270 505 g,293 533 k,330 533 P,144 520 b,168 530 P,176 550 n,156 563 Y,187 563 m,228 568 k,232 568 N,182 625 t,199 651 k,208 671 R,227 643 R,253 620 p,252 624 M,255 594 T,279 585 p,299 607 R,314 625 G,306 651 g,262 655 P,236 675 m,221 696 p,278 681 r,288 682 Y,262 705 y,233 738 K,115 680 O,628 659 y,630 722 k,680 217 r,694 220 b,713 224 T,685 238 T,655 233 N,662 243 o,664 258 t,629 258 t,600 276 r,611 287 N,655 283 o,634 310 O,657 313 p,610 326 T,591 337 o,626 338 y`;

document.getElementById("airports").innerHTML = airports.split(",").map(a => {
  const [x, y, c] = a.split(" ");
  return `<circle cx="${x}" cy="${y}" r="11" fill="${palette[c]}" fill-opacity=".87" stroke="#5c5c5c" stroke-width="3"/>`;
}).join("");

const cities = ["Null", "Ada..", "Agar..", "Agat..", "Agra", "Ahm..", "Aizw..", "Ajmer", "Akola", "Alla..", "Along", "Amri..",
  "Aura..", "Bag..", "Baks..", "Ban..", "Bare..", "Baro..", "Belg..", "Bella..", "Beng..", "Bhat..", "Bha..", "Bhiw..",
  "B", "B", "B", "B", "B", "B", "B", "C", "C", "C", "Co", "Co"];
const legendColors = ["#8ba6c5", "#c2dcef", "#f7b475", "#ffd3aa", "#92c18b", "#b3e1a9", "#cfbc75", "#f6dd98", "#89bab7", "#b2d3cf",
  "#ec9193", "#ffbfbe", "#a7a09e", "#d0cac6", "#e3a2b8", "#fcd6e2", "#cba7c0", "#e2c3da", "#bea497", "#e4cec3"];

document.getElementById("legend").innerHTML = cities.map((name, i) =>
  `<div><span class="swatch" style="background:${legendColors[i % 20]}"></span><span${i > 23 ? ' class="clip"' : ""}>${name}</span></div>`
).join("");
```
